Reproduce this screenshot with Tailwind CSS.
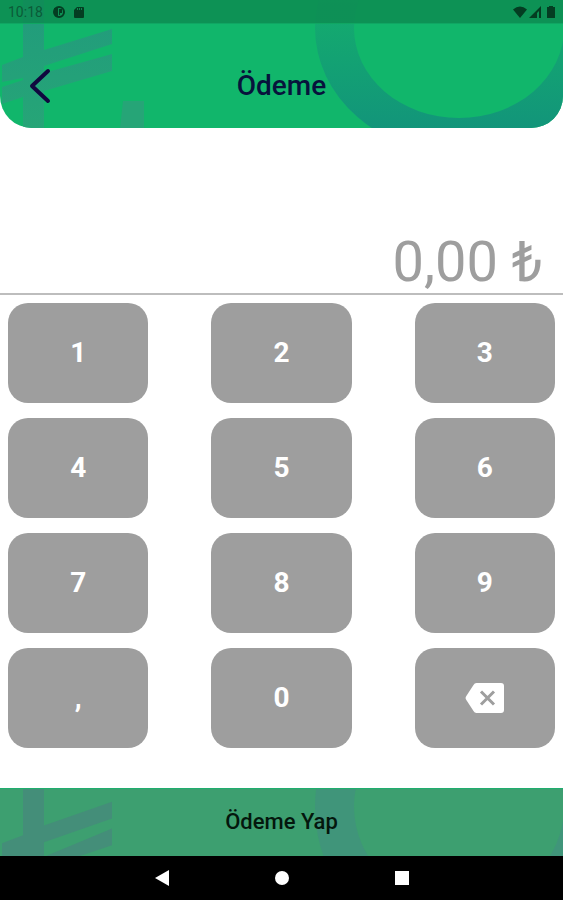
<!DOCTYPE html>
<html lang="tr">
<head>
<meta charset="utf-8">
<meta name="viewport" content="width=device-width, initial-scale=1">
<title>Ödeme</title>
<script src="https://cdn.jsdelivr.net/npm/@tailwindcss/browser@4"></script>
</head>
<body class="flex min-h-screen flex-col bg-white font-['Roboto','Noto_Sans',sans-serif]">
<header class="relative isolate flex h-32 flex-col overflow-hidden rounded-b-[32px] bg-[#11b66b]">
  <svg class="absolute inset-0 -z-10 h-full w-full" viewBox="0 0 563 128" preserveAspectRatio="none" aria-hidden="true">
    <defs>
      <linearGradient id="fade" x1="0" y1="0" x2="0" y2="1"><stop offset="0" stop-color="#219b7c"/><stop offset="1" stop-color="#26a577"/></linearGradient>
      <linearGradient id="ring" gradientUnits="userSpaceOnUse" x1="0" y1="0" x2="0" y2="128"><stop offset="0" stop-color="#14ad6d"/><stop offset="1" stop-color="#12957a"/></linearGradient>
    </defs>
    <path fill="url(#fade)" d="M23 0h21v50L112 29v15L44 66v7L112 54v17L44 91v37H23V97L2 104V87l21-7v-2L2 82V65l21-8z"/>
    <path fill="#26a577" d="M123 101h21v27h-24z"/>
    <path fill="url(#ring)" fill-rule="evenodd" d="M315 28a145 126 0 1 0 290 0a145 126 0 1 0-290 0zM354 28a105 90 0 1 0 210 0a105 90 0 1 0-210 0z"/>
  </svg>
  <div class="flex h-6 items-center justify-between border-b border-[#10a663] bg-[#0d8950]/80 px-2 text-[#043d22]">
    <div class="flex items-center gap-2">
      <span class="text-sm text-[#0b5a38]">10:18</span>
      <svg class="ml-0.5 size-3" viewBox="0 0 12 12" aria-hidden="true"><circle cx="6" cy="6" r="5" fill="none" stroke="currentColor" stroke-width="2"/><path fill="currentColor" d="M1 2h4v9H3L1 8zM6 3h3v4H7v2H6z"/></svg>
      <svg class="h-3 w-3" viewBox="0 0 12 12" aria-hidden="true"><path fill="currentColor" d="M4 1h6q1 0 1 1v9q0 1-1 1H2q-1 0-1-1V4z"/><path stroke="#0d8950" d="M4.500 2v2M6.500 2v2M8.500 2v2"/></svg>
    </div>
    <div class="flex items-center gap-0.5">
      <svg class="h-3 w-3.5" viewBox="0 0 14 12" aria-hidden="true"><path fill="currentColor" d="M0 3.500q7-6 14 0L7 12z"/></svg>
      <svg class="size-3" viewBox="0 0 12 12" aria-hidden="true"><path fill="currentColor" d="M0 12 12 0v12h-2V5L8 7v5z"/></svg>
      <svg class="ml-1 h-3 w-2" viewBox="0 0 8 12" aria-hidden="true"><path fill="currentColor" d="M2 0h4v1h2v11H0V1h2z"/></svg>
    </div>
  </div>
  <div class="grid flex-1 grid-cols-3 items-center px-5 pb-1 pt-6">
    <button type="button" aria-label="Geri" class="flex size-10 items-center justify-center text-[#10083f]">
      <svg class="h-9 w-6" viewBox="0 0 24 36" aria-hidden="true"><path fill="none" stroke="currentColor" stroke-width="4" stroke-linecap="round" stroke-linejoin="round" d="M20 3 4 18l16 15"/></svg>
    </button>
    <h1 class="text-center text-[28px] leading-8 font-medium text-[#07133c]">Ödeme</h1>
  </div>
</header>
<main class="flex flex-1 flex-col">
  <div class="flex h-[167px] items-end justify-end border-b-2 border-[#bdbdbd] px-5">
    <output aria-label="Tutar" class="text-[56px] leading-[62px] text-[#9e9e9e]">0,00 ₺</output>
  </div>
  <div class="grid grid-cols-3 gap-x-[63px] gap-y-[15px] p-2 text-[28px] font-bold text-white">
    <button type="button" class="h-25 rounded-[20px] bg-[#9e9e9e]">1</button>
    <button type="button" class="h-25 rounded-[20px] bg-[#9e9e9e]">2</button>
    <button type="button" class="h-25 rounded-[20px] bg-[#9e9e9e]">3</button>
    <button type="button" class="h-25 rounded-[20px] bg-[#9e9e9e]">4</button>
    <button type="button" class="h-25 rounded-[20px] bg-[#9e9e9e]">5</button>
    <button type="button" class="h-25 rounded-[20px] bg-[#9e9e9e]">6</button>
    <button type="button" class="h-25 rounded-[20px] bg-[#9e9e9e]">7</button>
    <button type="button" class="h-25 rounded-[20px] bg-[#9e9e9e]">8</button>
    <button type="button" class="h-25 rounded-[20px] bg-[#9e9e9e]">9</button>
    <button type="button" class="h-25 rounded-[20px] bg-[#9e9e9e]">,</button>
    <button type="button" class="h-25 rounded-[20px] bg-[#9e9e9e]">0</button>
    <button type="button" aria-label="Sil" class="flex h-25 items-center justify-center rounded-[20px] bg-[#9e9e9e]">
      <svg class="h-[30px] w-[39px]" viewBox="0 0 39 30" aria-hidden="true"><path fill="currentColor" d="M11.500 0H36q3 0 3 3v24q0 3-3 3H11.500q-2 0-3-2L1 16.500q-1-1.500 0-3L8.500 2q1-2 3-2z"/><path stroke="#9e9e9e" stroke-width="3" d="m16 8.500 13 13m0-13-13 13"/></svg>
    </button>
  </div>
</main>
<button type="button" class="relative isolate flex h-17 items-center justify-center overflow-hidden border-t border-[#1fae6e] bg-[#3d9f70] pb-0.5 text-[22px] font-medium text-[#04170d]">
  <svg class="absolute inset-0 -z-10 h-full w-full" viewBox="0 0 563 68" preserveAspectRatio="none" aria-hidden="true">
    <path fill="#448e79" d="M23 0h21v37L112 13v17L44 54v14H2V55l21-8zM112 40v17L80 68H46z"/>
    <path fill="#40957a" fill-rule="evenodd" d="M315 18a145 148 0 1 0 290 0a145 148 0 1 0-290 0zM354 18a105 100 0 1 0 210 0a105 100 0 1 0-210 0z"/>
  </svg>
  Ödeme Yap
</button>
<nav aria-label="Sistem" class="flex h-11 items-center justify-center gap-24 bg-black text-white">
  <button type="button" aria-label="Geri" class="flex size-6 items-center justify-center"><svg class="size-4" viewBox="0 0 16 16" aria-hidden="true"><path fill="currentColor" d="M1 8 15 0v16z"/></svg></button>
  <button type="button" aria-label="Ana ekran" class="flex size-6 items-center justify-center"><span class="size-3.5 rounded-full bg-white"></span></button>
  <button type="button" aria-label="Son uygulamalar" class="flex size-6 items-center justify-center"><span class="size-3.5 bg-white"></span></button>
</nav>
</body>
</html>
